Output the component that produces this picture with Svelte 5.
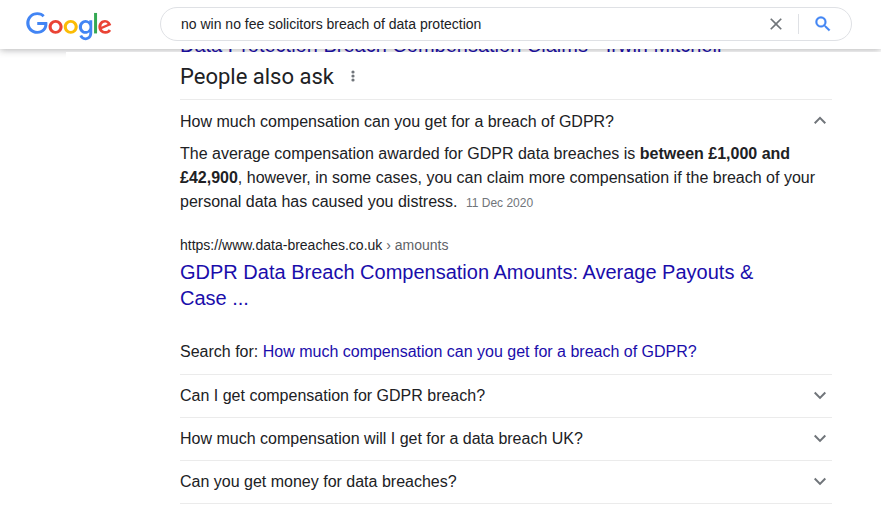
<script lang="ts">
	interface Question {
		text: string;
		open: boolean;
		answer?: boolean;
	}

	let query = $state('no win no fee solicitors breach of data protection');

	let questions = $state<Question[]>([
		{ text: 'How much compensation can you get for a breach of GDPR?', open: true, answer: true },
		{ text: 'Can I get compensation for GDPR breach?', open: false },
		{ text: 'How much compensation will I get for a data breach UK?', open: false },
		{ text: 'Can you get money for data breaches?', open: false }
	]);
</script>

<header class="topbar">
	<a class="logo" href="/" aria-label="Google">
		<svg viewBox="0 0 272 92" aria-hidden="true">
			<path fill="#EA4335" d="M115.75 47.18c0 12.77-9.99 22.18-22.25 22.18s-22.25-9.41-22.25-22.18C71.25 34.32 81.24 25 93.5 25s22.25 9.32 22.25 22.18zm-9.74 0c0-7.98-5.79-13.44-12.51-13.44S80.99 39.2 80.99 47.18c0 7.9 5.79 13.44 12.51 13.44s12.51-5.55 12.51-13.44z" />
			<path fill="#FBBC05" d="M163.75 47.18c0 12.77-9.99 22.18-22.25 22.18s-22.25-9.41-22.25-22.18c0-12.85 9.99-22.18 22.25-22.18s22.25 9.32 22.25 22.18zm-9.74 0c0-7.98-5.79-13.44-12.51-13.44s-12.51 5.46-12.51 13.44c0 7.9 5.79 13.44 12.51 13.44s12.51-5.55 12.51-13.44z" />
			<path fill="#4285F4" d="M209.75 26.34v39.82c0 16.38-9.66 23.07-21.08 23.07-10.75 0-17.22-7.19-19.66-13.07l8.48-3.53c1.51 3.61 5.21 7.87 11.17 7.87 7.31 0 11.84-4.51 11.84-13v-3.19h-.34c-2.18 2.69-6.38 5.04-11.68 5.04-11.09 0-21.25-9.66-21.25-22.09 0-12.52 10.16-22.26 21.25-22.26 5.29 0 9.49 2.35 11.68 4.96h.34v-3.61h9.25zm-8.56 20.92c0-7.81-5.21-13.52-11.84-13.52-6.72 0-12.35 5.71-12.35 13.52 0 7.73 5.63 13.36 12.35 13.36 6.63 0 11.84-5.63 11.84-13.36z" />
			<path fill="#34A853" d="M225 3v65h-9.5V3h9.5z" />
			<path fill="#EA4335" d="M262.02 54.48l7.56 5.04c-2.44 3.61-8.32 9.83-18.48 9.83-12.6 0-22.01-9.74-22.01-22.18 0-13.19 9.49-22.18 20.92-22.18 11.51 0 17.14 9.16 18.98 14.11l1.01 2.52-29.65 12.28c2.27 4.45 5.8 6.72 10.75 6.72 4.96 0 8.4-2.44 10.92-6.14zm-23.27-7.98l19.82-8.23c-1.09-2.77-4.37-4.7-8.23-4.7-4.95 0-11.84 4.37-11.59 12.93z" />
			<path fill="#4285F4" d="M35.29 41.41V32H67c.31 1.64.47 3.58.47 5.68 0 7.06-1.93 15.79-8.15 22.01-6.05 6.3-13.78 9.66-24.02 9.66C16.32 69.35.36 53.89.36 34.91.36 15.93 16.32.47 35.3.47c10.5 0 17.98 4.12 23.6 9.49l-6.64 6.64c-4.03-3.78-9.49-6.72-16.97-6.72-13.86 0-24.7 11.17-24.7 25.03 0 13.86 10.84 25.03 24.7 25.03 8.99 0 14.11-3.61 17.39-6.89 2.66-2.66 4.41-6.46 5.1-11.65l-22.49.01z" />
		</svg>
	</a>
	<form class="search" role="search" onsubmit={(e) => e.preventDefault()}>
		<input type="text" aria-label="Search" bind:value={query} />
		<button type="button" class="clear" aria-label="Clear" onclick={() => (query = '')}>
			<svg viewBox="0 0 24 24" aria-hidden="true">
				<path d="M19 6.41L17.59 5 12 10.59 6.41 5 5 6.41 10.59 12 5 17.59 6.41 19 12 13.41 17.59 19 19 17.59 13.41 12z" />
			</svg>
		</button>
		<button type="submit" class="submit" aria-label="Google Search">
			<svg viewBox="0 0 24 24" aria-hidden="true">
				<path d="M15.5 14h-.79l-.28-.27A6.471 6.471 0 0 0 16 9.5 6.5 6.5 0 1 0 9.5 16c1.61 0 3.09-.59 4.23-1.57l.27.28v.79l5 4.99L20.49 19l-4.99-5zm-6 0C7.01 14 5 11.99 5 9.5S7.01 5 9.5 5 14 7.01 14 9.5 11.99 14 9.5 14z" />
			</svg>
		</button>
	</form>
</header>

<main>
	<div class="previous">
		<a href="/irwin-mitchell">Data Protection Breach Compensation Claims - Irwin Mitchell</a>
	</div>

	<section class="related">
		<div class="heading">
			<h2>People also ask</h2>
			<button type="button" aria-label="About this result">
				<svg viewBox="0 0 4 12" aria-hidden="true">
					<circle cx="2" cy="2" r="1.6" />
					<circle cx="2" cy="6" r="1.6" />
					<circle cx="2" cy="10" r="1.6" />
				</svg>
			</button>
		</div>

		{#each questions as question}
			<div class="item">
				<button
					type="button"
					class="question"
					class:open={question.open}
					aria-expanded={question.open}
					onclick={() => (question.open = !question.open)}
				>
					<span>{question.text}</span>
					<svg viewBox="0 0 24 24" aria-hidden="true">
						{#if question.open}
							<path d="M7.41 14.91L12 10.33l4.59 4.58L18 13.5l-6-6-6 6z" />
						{:else}
							<path d="M7.41 7.84L12 12.42l4.59-4.58L18 9.25l-6 6-6-6z" />
						{/if}
					</svg>
				</button>

				{#if question.open && question.answer}
					<div class="answer">
						<p class="snippet">
							The average compensation awarded for GDPR data breaches is
							<b>between £1,000 and £42,900</b>, however, in some cases, you can claim more
							compensation if the breach of your personal data has caused you distress.
							<span class="date">11 Dec 2020</span>
						</p>
						<a class="source" href="https://www.data-breaches.co.uk">
							<cite>https://www.data-breaches.co.uk <span>› amounts</span></cite>
							<h3>GDPR Data Breach Compensation Amounts: Average Payouts &amp; Case ...</h3>
						</a>
						<p class="search-for">
							Search for: <a href="/search">{question.text}</a>
						</p>
					</div>
				{/if}
			</div>
		{/each}
	</section>
</main>

<style>
	:global(body) {
		background: #fff;
		color: #202124;
		font-family: 'Liberation Sans', Arial, sans-serif;
	}

	button {
		display: flex;
		align-items: center;
		padding: 0;
		border: none;
		background: none;
		color: inherit;
		font: inherit;
		cursor: pointer;
	}

	a {
		color: #1a0dab;
		text-decoration: none;
	}

	a:hover {
		text-decoration: underline;
	}

	svg {
		display: block;
		fill: currentColor;
	}

	.topbar {
		position: sticky;
		top: 0;
		z-index: 1;
		display: flex;
		align-items: center;
		box-sizing: border-box;
		height: 49px;
		padding: 0 29px 1px 26px;
		background: #fff;
		box-shadow: 0 1px 7px rgba(32, 33, 36, 0.34);
	}

	.logo {
		width: 134px;
		flex-shrink: 0;
	}

	.logo svg {
		width: 86px;
		height: 29px;
		margin-top: 4px;
	}

	.search {
		display: flex;
		align-items: center;
		flex: 1;
		box-sizing: border-box;
		max-width: 692px;
		height: 34px;
		padding: 0 18px 0 20px;
		border: 1px solid #dfe1e5;
		border-radius: 17px;
	}

	.search input {
		flex: 1;
		min-width: 0;
		padding: 0;
		border: none;
		outline: none;
		background: none;
		color: #202124;
		font: 14px 'Liberation Sans', Arial, sans-serif;
	}

	.search svg {
		width: 20px;
		height: 20px;
	}

	.clear {
		height: 20px;
		padding-right: 12px;
		border-right: 1px solid #dfe1e5;
		color: #70757a;
	}

	.submit {
		padding-left: 14px;
		color: #4285f4;
	}

	.submit path {
		stroke: currentColor;
		stroke-width: 0.5;
	}

	main {
		padding-left: 66px;
	}

	.previous {
		display: flex;
		align-items: flex-end;
		height: 3px;
		padding-left: 114px;
		overflow: hidden;
		font-size: 20px;
		line-height: 14px;
		white-space: nowrap;
	}

	.related {
		position: relative;
		z-index: 2;
		max-width: 652px;
		padding: 0 49px 0 114px;
		background: #fff;
	}

	.heading {
		display: flex;
		align-items: center;
		gap: 17px;
		height: 47px;
	}

	.heading h2 {
		margin: 0;
		padding-top: 2px;
		font: 22px/28px Roboto, sans-serif;
	}

	.heading button {
		color: #70757a;
	}

	.heading svg {
		width: 4px;
		height: 12px;
	}

	.item {
		border-top: 1px solid #ebebeb;
	}

	.item:last-child {
		border-bottom: 1px solid #ebebeb;
	}

	.question {
		justify-content: space-between;
		width: 100%;
		height: 42px;
		font-size: 16px;
		text-align: left;
	}

	.question.open span {
		padding-top: 2px;
	}

	.question svg {
		width: 24px;
		height: 24px;
		color: #70757a;
	}

	.answer {
		padding-bottom: 10px;
		font-size: 16px;
		line-height: 24px;
	}

	.answer p {
		margin: 0;
	}

	.date {
		margin-left: 4px;
		color: #70757a;
		font-size: 12px;
	}

	.source {
		display: block;
		margin: 20px 0 29px;
	}

	.source cite {
		display: block;
		margin-bottom: 4px;
		color: #202124;
		font-size: 14px;
		font-style: normal;
		line-height: 20px;
	}

	.source cite span {
		color: #5f6368;
	}

	.source h3 {
		margin: 0;
		padding-right: 40px;
		font-size: 20px;
		font-weight: 400;
		line-height: 26px;
	}
</style>
